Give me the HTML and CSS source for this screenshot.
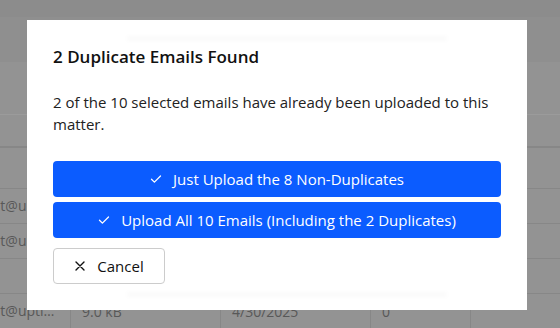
FILE: index.html
```html
<!DOCTYPE html>
<html lang="en">

<head>
    <meta charset="UTF-8" />
    <meta name="viewport" content="width=device-width, initial-scale=1" />
    <title>Duplicate Emails</title>
    <link rel="stylesheet" href="styles.css">
</head>

<body>
    <div class="page">
        <div class="topbar"></div>
        <div class="toolbar"></div>
        <div class="filters"></div>
        <div class="table-head"></div>
        <div class="row first"><span class="cell"></span><span class="cell"></span><span class="cell"></span><span class="cell"></span><span class="cell"></span></div>
        <div class="row"><span class="cell">pat@uptime.com</span><span class="cell"></span><span class="cell"></span><span class="cell"></span><span class="cell"></span></div>
        <div class="row"><span class="cell">pat@uptime.com</span><span class="cell"></span><span class="cell"></span><span class="cell"></span><span class="cell"></span></div>
        <div class="row"><span class="cell"></span><span class="cell"></span><span class="cell"></span><span class="cell"></span><span class="cell"></span></div>
        <div class="row"><span class="cell">pat@uptime.com</span><span class="cell">9.0 kB</span><span class="cell">4/30/2025</span><span class="cell">0</span><span class="cell"></span></div>
    </div>

    <div class="modal" role="dialog" aria-labelledby="modalTitle">
        <h2 id="modalTitle">2 Duplicate Emails Found</h2>
        <p>2 of the 10 selected emails have already been uploaded to this matter.</p>
        <div class="actions">
            <button class="btn primary">
                <svg width="12" height="12" viewBox="0 0 12 12"><path d="M1.5 6.3 4.4 9.1 10.5 3" fill="none" stroke="currentColor" stroke-width="1.3" stroke-linecap="round" stroke-linejoin="round"/></svg>
                Just Upload the 8 Non-Duplicates
            </button>
            <button class="btn primary">
                <svg width="12" height="12" viewBox="0 0 12 12"><path d="M1.5 6.3 4.4 9.1 10.5 3" fill="none" stroke="currentColor" stroke-width="1.3" stroke-linecap="round" stroke-linejoin="round"/></svg>
                Upload All 10 Emails (Including the 2 Duplicates)
            </button>
            <button class="btn cancel">
                <svg width="12" height="12" viewBox="0 0 12 12"><path d="M2 2 10 10M10 2 2 10" fill="none" stroke="currentColor" stroke-width="1.4" stroke-linecap="round"/></svg>
                Cancel
            </button>
        </div>
    </div>
</body>

</html>
```

FILE: styles.css
```css
:root {
    --shade: #939393;
    --line: #878787;
    --accent: #0b5cff;
}

body {
    margin: 0;
    background-color: var(--shade);
    font-family: 'Open Sans', sans-serif;
    color: #111;
    overflow: hidden;
}

.page {
    width: 560px;
    height: 328px;
    color: #585858;
    font-size: 14px;
}

.topbar {
    height: 17px;
    background-color: #8c8c8c;
}

.toolbar {
    height: 45px;
    background-color: #8f8f8f;
}

.filters {
    height: 52px;
    border-bottom: 1px solid #9b9b9b;
}

.table-head {
    height: 31px;
    border-bottom: 2px solid var(--line);
}

.row {
    display: grid;
    grid-template-columns: 98px 150px 150px 100px 1fr;
    margin-left: -27px;
    height: 34px;
    border-bottom: 1px solid var(--line);
}

.row.first {
    height: 40px;
}

.cell {
    display: flex;
    align-items: center;
    padding-left: 11px;
    border-right: 1px solid var(--line);
    white-space: nowrap;
    overflow: hidden;
}

.row .cell:first-child {
    display: block;
    line-height: 34px;
    padding-right: 12px;
    text-overflow: ellipsis;
}

.row .cell:last-child {
    border-right: none;
}

.modal {
    position: absolute;
    left: 27px;
    top: 20px;
    width: 448px;
    padding: 20px 26px 26px;
    background-color: #fff;
}

.modal::before,
.modal::after {
    content: "";
    position: absolute;
    left: 100px;
    width: 320px;
    height: 3px;
    background-color: rgba(0, 0, 0, 0.03);
    filter: blur(2px);
}

.modal::before {
    top: 17px;
}

.modal::after {
    bottom: 14px;
}

.modal h2 {
    margin: 6px 0 0;
    font-size: 17px;
    font-weight: 600;
    line-height: 22px;
}

.modal p {
    margin: 23px 0 0;
    font-size: 15px;
    line-height: 22px;
    color: #222;
}

.actions {
    display: flex;
    flex-direction: column;
    align-items: flex-start;
    gap: 5px;
    margin-top: 26px;
}

.btn {
    display: flex;
    align-items: center;
    justify-content: center;
    gap: 11px;
    height: 36px;
    font-family: inherit;
    font-size: 15px;
    font-weight: 500;
    border-radius: 4px;
    cursor: pointer;
}

.primary {
    width: 100%;
    background-color: var(--accent);
    color: #fff;
    border: none;
}

.cancel {
    margin-top: 5px;
    width: 112px;
    background-color: #fff;
    color: #111;
    border: 1px solid #ccc;
}
```
